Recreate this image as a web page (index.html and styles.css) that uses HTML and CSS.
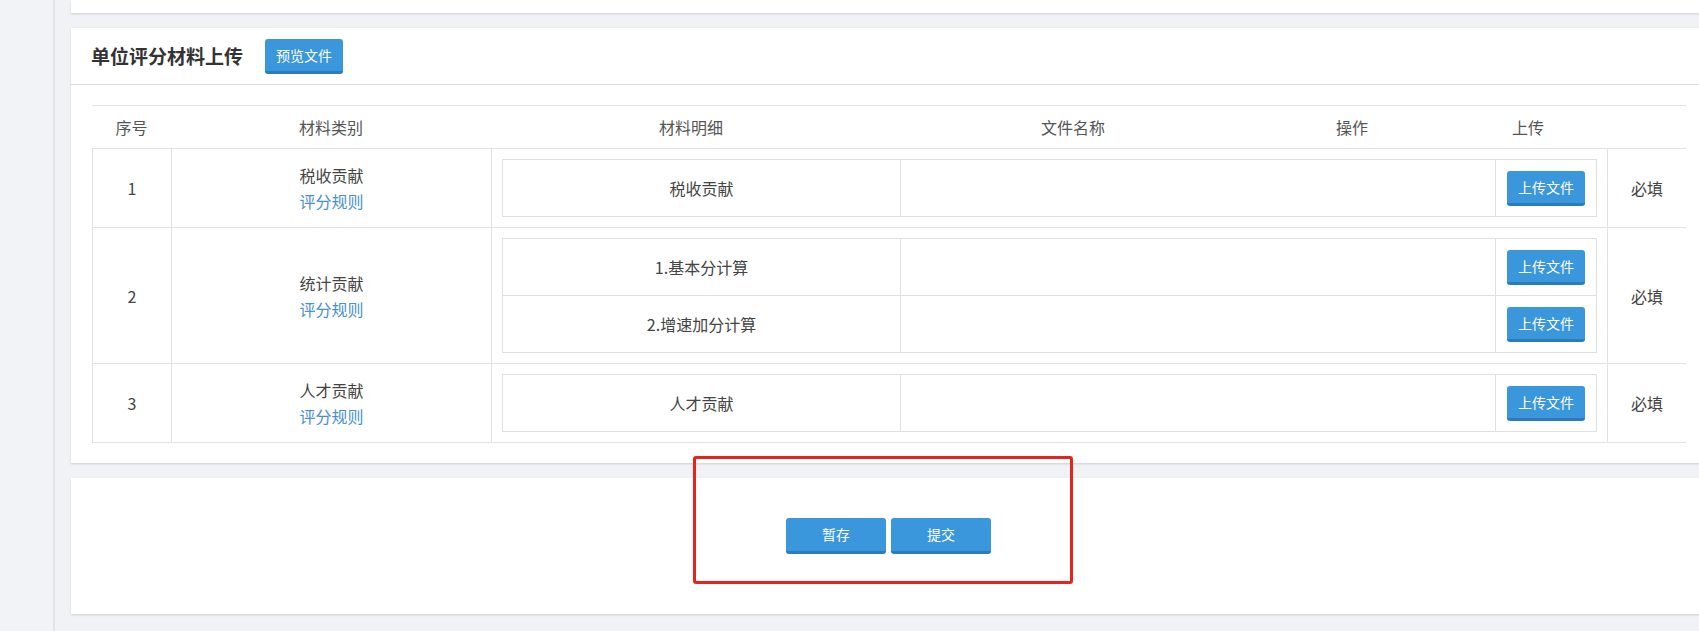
FILE: index.html
```html
<!DOCTYPE html>
<html lang="zh-CN">
<head>
    <meta charset="UTF-8">
    <title>单位评分材料上传</title>
    <link rel="stylesheet" href="styles.css">
</head>
<body>
    <div class="sidebar"></div>
    <div class="main">
        <div class="card card-top"></div>

        <div class="card">
            <div class="card-header">
                <h2 class="title">单位评分材料上传</h2>
                <button class="btn">预览文件</button>
            </div>
            <div class="card-body">
                <div class="thead">
                    <div>序号</div>
                    <div>材料类别</div>
                    <div>材料明细</div>
                    <div>文件名称</div>
                    <div>操作</div>
                    <div>上传</div>
                    <div></div>
                </div>
                <div class="tbody">
                    <div class="row">
                        <div class="cell">1</div>
                        <div class="cell type">税收贡献<a href="#">评分规则</a></div>
                        <div class="cell detail">
                            <div class="box">
                                <div class="item">
                                    <div class="name">税收贡献</div>
                                    <div class="file"></div>
                                    <div class="op"><button class="btn">上传文件</button></div>
                                </div>
                            </div>
                        </div>
                        <div class="cell">必填</div>
                    </div>
                    <div class="row">
                        <div class="cell">2</div>
                        <div class="cell type">统计贡献<a href="#">评分规则</a></div>
                        <div class="cell detail">
                            <div class="box">
                                <div class="item">
                                    <div class="name">1.基本分计算</div>
                                    <div class="file"></div>
                                    <div class="op"><button class="btn">上传文件</button></div>
                                </div>
                                <div class="item">
                                    <div class="name">2.增速加分计算</div>
                                    <div class="file"></div>
                                    <div class="op"><button class="btn">上传文件</button></div>
                                </div>
                            </div>
                        </div>
                        <div class="cell">必填</div>
                    </div>
                    <div class="row">
                        <div class="cell">3</div>
                        <div class="cell type">人才贡献<a href="#">评分规则</a></div>
                        <div class="cell detail">
                            <div class="box">
                                <div class="item">
                                    <div class="name">人才贡献</div>
                                    <div class="file"></div>
                                    <div class="op"><button class="btn">上传文件</button></div>
                                </div>
                            </div>
                        </div>
                        <div class="cell">必填</div>
                    </div>
                </div>
            </div>
        </div>

        <div class="card card-actions">
            <button class="btn btn-lg">暂存</button>
            <button class="btn btn-lg">提交</button>
            <div class="mark"></div>
        </div>
    </div>
</body>
</html>
```

FILE: styles.css
```css
* {
    box-sizing: border-box;
}

body {
    margin: 0;
    display: flex;
    height: 631px;
    overflow: hidden;
    background-color: #f0f2f5;
    font-family: "Noto Sans CJK SC", "Liberation Sans", sans-serif;
    color: #444;
}

.sidebar {
    flex: 0 0 55px;
    background-color: #f2f3f6;
    border-right: 2px solid #e2e4e8;
}

.main {
    flex: 0 0 auto;
    padding-left: 16px;
}

.card {
    width: 1635px;
    background-color: #fff;
    box-shadow: 0 1px 2px rgba(0,0,0,0.15);
    margin-bottom: 15px;
}

.card-top {
    height: 13px;
}

.card-header {
    display: flex;
    align-items: center;
    height: 57px;
    padding: 0 20px;
    border-bottom: 1px solid #dcdcdc;
}

.title {
    margin: 0 22px 2px 0;
    font-size: 19px;
    font-weight: bold;
    color: #333;
}

.btn {
    height: 35px;
    padding: 0 11px;
    border: none;
    border-bottom: 3px solid #2a7cbd;
    border-radius: 3px;
    background-color: #3a97dc;
    color: #fff;
    font-family: inherit;
    font-size: 14px;
    line-height: 32px;
    cursor: pointer;
}

.card-body {
    padding: 20px 20px 20px 21px;
}

.thead {
    display: grid;
    grid-template-columns: 79px 320px 400px 364px 194px 158px 79px;
    width: 1594px;
    height: 44px;
    border-top: 1px solid #e3e3e3;
    border-bottom: 1px solid #e3e3e3;
    color: #555;
    font-size: 16px;
    text-align: center;
    line-height: 42px;
}

.tbody {
    width: 1594px;
}

.row {
    display: grid;
    grid-template-columns: 79px 320px 1116px 79px;
    border-bottom: 1px solid #e3e3e3;
}

.cell {
    display: flex;
    flex-direction: column;
    justify-content: center;
    align-items: center;
    border-left: 1px solid #e3e3e3;
    font-size: 16px;
    line-height: 26px;
}

.cell.type a {
    color: #4a90d0;
    text-decoration: none;
}

.cell.detail {
    display: block;
    padding: 10px;
}

.box {
    border: 1px solid #e0e0e0;
}

.item {
    display: grid;
    grid-template-columns: 397px 1fr 101px;
    height: 56px;
}

.item + .item {
    height: 57px;
    border-top: 1px solid #e0e0e0;
}

.item .name {
    display: flex;
    align-items: center;
    justify-content: center;
    font-size: 16px;
}

.item .file,
.item .op {
    border-left: 1px solid #e0e0e0;
}

.item .op {
    display: flex;
    align-items: center;
    justify-content: center;
}

.card-actions {
    position: relative;
    display: flex;
    justify-content: center;
    gap: 5px;
    padding: 40px 0 60px;
}

.btn-lg {
    width: 100px;
    height: 36px;
    line-height: 33px;
}

.mark {
    position: absolute;
    left: 622px;
    top: -22px;
    width: 380px;
    height: 128px;
    border: 3px solid #e8231c;
    border-radius: 3px;
}
```
